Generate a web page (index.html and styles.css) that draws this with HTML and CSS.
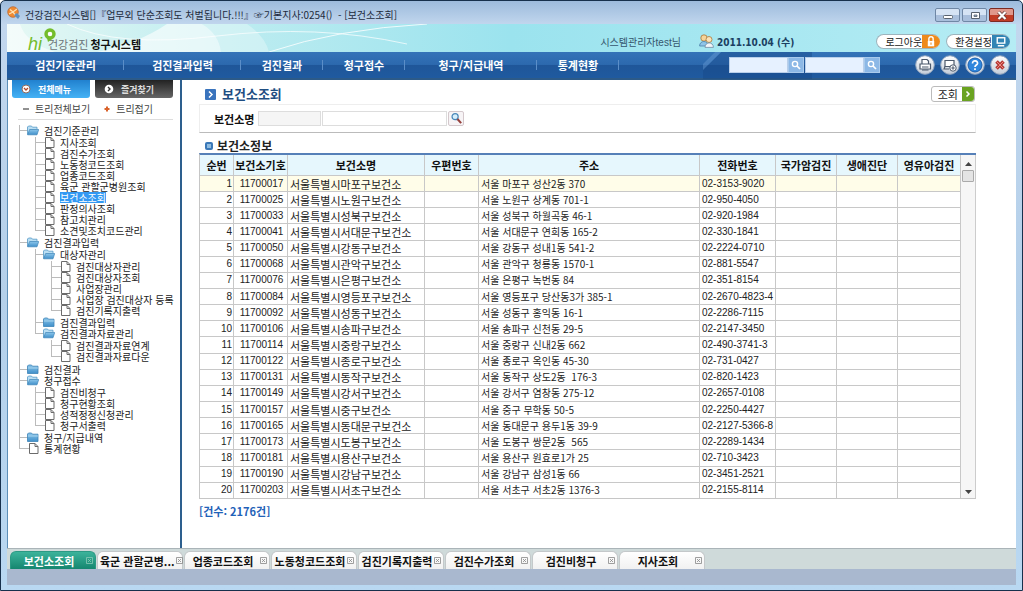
FILE: index.html
```html
<!DOCTYPE html>
<html lang="ko">
<head>
<meta charset="utf-8">
<title>보건소조회</title>
<link rel="stylesheet" href="styles.css">
</head>
<body>
<svg class="defs" aria-hidden="true">
  <defs>
    <linearGradient id="fold" x1="0" y1="0" x2="0" y2="1"><stop offset="0" stop-color="#8cc6ea"/><stop offset="1" stop-color="#3f8fca"/></linearGradient>
    <linearGradient id="ball" x1="0" y1="0" x2="0" y2="1"><stop offset="0" stop-color="#ffffff"/><stop offset="1" stop-color="#c3ccd8"/></linearGradient>
    <symbol id="folder" viewBox="0 0 12 10"><path d="M.5 9V1.5L1.5.5h3l1 1.2h5.500V9z" fill="url(#fold)" stroke="#3c84b8" stroke-width=".8"/><path d="M1 3.500h10" stroke="#b8def4" stroke-width=".8"/></symbol>
    <symbol id="open" viewBox="0 0 12 10"><path d="M.5 9V1.500L1.500.5h3l1 1.200H10v2" fill="#b9def3" stroke="#5599c6" stroke-width=".8"/><path d="M.6 9.300 2.600 4H11.700L10 9.300z" fill="url(#fold)" stroke="#3c84b8" stroke-width=".7"/></symbol>
    <symbol id="page" viewBox="0 0 12 11"><path d="M2.500.5h5.500l3 3v7H2.500z" fill="#fff" stroke="#6b6b6b"/><path d="M8 .5v3h3" fill="none" stroke="#6b6b6b"/></symbol>
    <symbol id="lens" viewBox="0 0 12 12"><circle cx="5" cy="5" r="2.600" fill="none" stroke="#fff" stroke-width="1.400"/><path d="m7 7 3 3" stroke="#fff" stroke-width="1.700"/></symbol>
    <symbol id="tabx" viewBox="0 0 7 7"><path d="M.5.5h6v6h-6zM2 2l3 3M5 2 2 5" fill="none" stroke="currentColor" stroke-width=".8"/></symbol>
  </defs>
</svg>
<div class="window">
  <header class="titlebar">
    <svg class="app-icon" viewBox="0 0 14 14"><circle cx="6" cy="6" r="5.300" fill="#ef8a32" stroke="#b8622a" stroke-width=".7"/><path d="M3 3.500 6 6l4-3M2 8l4-2 3 4" stroke="#fde0b4" stroke-width="1.300" fill="none"/><path d="m7 9 3-2 3 3-2 3z" fill="#5d8fc0"/></svg>
    <span class="title">건강검진시스템[]『업무외 단순조회도 처벌됩니다.!!!』☞기본지사:0254()&nbsp; - [보건소조회]</span>
    <div class="controls">
      <button type="button" aria-label="최소화"><svg viewBox="0 0 24 13"><rect x="7.500" y="6.500" width="9" height="3" rx="1" fill="#fff" stroke="#59636f"/></svg></button>
      <button type="button" aria-label="최대화"><svg viewBox="0 0 24 13"><path d="M8.500 3.500h8v6h-8z" fill="#fff" stroke="#59636f"/><path d="M11 6h3v1.500h-3z" fill="#9fb6d4" stroke="#59636f" stroke-width=".8"/></svg></button>
      <button type="button" class="close" aria-label="닫기"><svg viewBox="0 0 24 13"><path d="m8.500 3 7 7m0-7-7 7" stroke="#5c3434" stroke-width="3.600"/><path d="m8.500 3 7 7m0-7-7 7" stroke="#fff" stroke-width="2.200"/></svg></button>
    </div>
  </header>

  <div class="app">
    <div class="banner">
      <svg class="swoosh" viewBox="0 0 1009 28" preserveAspectRatio="none" aria-hidden="true">
        <path d="M0 0H13Q18 18 48 28H0z" fill="#fff" opacity=".55"/>
        <path d="M160 0H195Q212 10 214 28H90Q130 20 160 0z" fill="#fff" opacity=".6"/>
        <path d="M214 28Q212 10 195 0H240Q258 12 262 28z" fill="#fff" opacity=".3"/>
        <path d="M60 0Q110 24 210 12T400 20" fill="none" stroke="#fff" opacity=".7"/>
        <path d="M262 28Q330 5 420 0" fill="none" stroke="#fff" opacity=".8"/>
      </svg>
      <a class="logo" href="#">
        <svg viewBox="0 0 28 26" aria-hidden="true"><circle cx="22" cy="8" r="4" fill="#fff" stroke="#74bd2c" stroke-width="3.400"/><path d="m19 12 1 4 4-3" fill="#74bd2c"/></svg>
        <em>hi</em><span>건강검진</span><strong>청구시스템</strong>
      </a>
      <div class="session">
        <span class="user">시스템관리자test님</span>
        <svg class="people" viewBox="0 0 15 14"><circle cx="5" cy="4" r="3.200" fill="#f6d59a" stroke="#a8763a" stroke-width=".8"/><path d="M.6 12c0-6 8.500-6 8.500 0z" fill="#8fc5e8" stroke="#4b7fa8" stroke-width=".8"/><circle cx="10" cy="5.500" r="3" fill="#fbe3b8" stroke="#a8763a" stroke-width=".8"/><path d="M6 13.400c0-6 8.400-6 8.400 0z" fill="#f2f6fa" stroke="#6f8ba4" stroke-width=".8"/></svg>
        <strong class="date">2011.10.04 (수)</strong>
      </div>
      <button type="button" class="pill">로그아웃<span class="pill-end orange"><svg viewBox="0 0 16 14"><path d="M6 7V4.500a2 2 0 0 1 4 0V7" fill="none" stroke="#fff" stroke-width="1.300"/><rect x="5" y="6.500" width="6" height="5" fill="#fff"/><path d="M8 8v2" stroke="#ee8a1c"/></svg></span></button>
      <button type="button" class="pill">환경설정<span class="pill-end teal"><svg viewBox="0 0 16 14"><rect x="4.500" y="3.500" width="7" height="5" fill="none" stroke="#fff" stroke-width="1.300"/><path d="M5 11h6" stroke="#fff" stroke-width="1.300"/></svg></span></button>
    </div>

    <nav class="mainnav">
      <svg class="facets" viewBox="0 0 200 27" preserveAspectRatio="none" aria-hidden="true"><path d="M0 18 18 0h90v27H0z" fill="#164684" opacity=".4"/><path d="M0 18 18 0h-6L0 12z" fill="#6ea0d8" opacity=".4"/></svg>
      <a class="wide" href="#">검진기준관리</a>
      <a class="wide" href="#">검진결과입력</a>
      <a href="#">검진결과</a>
      <a href="#">청구접수</a>
      <a class="widest" href="#">청구/지급내역</a>
      <a href="#">통계현황</a>
      <div class="finders">
        <input type="text" aria-label="메뉴 검색"><button type="button" aria-label="메뉴 찾기"><svg><use href="#lens"/></svg></button>
        <input type="text" aria-label="화면 검색"><button type="button" aria-label="화면 찾기"><svg><use href="#lens"/></svg></button>
      </div>
      <div class="tools">
        <button type="button" aria-label="인쇄"><svg viewBox="0 0 20 20"><circle cx="10" cy="10" r="9.300" fill="url(#ball)" stroke="#8fa3bd"/><path d="M7 9V4.500h5l1.500 1.500v3M5 9h10.500v5H5z" fill="#fff" stroke="#4d5a6c" stroke-width="1.200"/><path d="M7 12h6.500M7 15h6.500" stroke="#4d5a6c"/></svg></button>
        <button type="button" aria-label="새 창"><svg viewBox="0 0 20 20"><circle cx="10" cy="10" r="9.300" fill="url(#ball)" stroke="#8fa3bd"/><path d="M5 5.500h9v6H5z" fill="#fff" stroke="#4d5a6c" stroke-width="1.200"/><circle cx="13" cy="13" r="3.200" fill="#fff" stroke="#4d5a6c"/><path d="M11.300 13h3.400M13 11.300v3.400M5 11.500l-1 2.500h5" stroke="#4d5a6c" stroke-width="1.100" fill="none"/></svg></button>
        <button type="button" aria-label="도움말"><svg viewBox="0 0 20 20"><circle cx="10" cy="10" r="9.300" fill="url(#ball)" stroke="#8fa3bd"/><circle cx="10" cy="10" r="7" fill="#2f86dc" stroke="#1c5fae"/><path d="M7.500 8.500c0-4 5.500-3.200 5 0-.3 1.600-2.500 1.600-2.500 3.500M10 13.200V15" fill="none" stroke="#fff" stroke-width="1.700"/></svg></button>
        <button type="button" aria-label="모두 닫기"><svg viewBox="0 0 20 20"><circle cx="10" cy="10" r="9.300" fill="url(#ball)" stroke="#8fa3bd"/><path d="m6.500 6.500 7 7m0-7-7 7" stroke="#b63a36" stroke-width="3.600"/><path d="m6.500 6.500 7 7m0-7-7 7" stroke="#ee8a80" stroke-width="1"/></svg></button>
      </div>
    </nav>

    <div class="body">
      <aside class="sidebar">
        <div class="side-tabs">
          <button type="button" class="on"><svg viewBox="0 0 10 10"><circle cx="5" cy="5" r="4" fill="#fff" stroke="#8f6b60"/><path d="m3 4 2 2 2-2" fill="none" stroke="#b5482a" stroke-width="1.300"/></svg>전체메뉴</button>
          <button type="button"><svg viewBox="0 0 10 10"><circle cx="5" cy="5" r="4.300" fill="#fff"/><path d="m4 3 2 2-2 2" fill="none" stroke="#333" stroke-width="1.400"/></svg>즐겨찾기</button>
        </div>
        <div class="side-actions">
          <button type="button"><svg viewBox="0 0 6 6"><path d="M0 3h6" stroke="#555" stroke-width="1.300"/></svg>트리전체보기</button>
          <button type="button"><svg viewBox="0 0 6 6"><path d="M.5 3h5M3 .5v5" stroke="#d9622b" stroke-width="2"/></svg>트리접기</button>
        </div>
        <ul class="tree">
          <li><a href="#"><svg><use href="#open"/></svg><span>검진기준관리</span></a>
            <ul>
              <li><a href="#"><svg><use href="#page"/></svg><span>지사조회</span></a></li>
              <li><a href="#"><svg><use href="#page"/></svg><span>검진수가조회</span></a></li>
              <li><a href="#"><svg><use href="#page"/></svg><span>노동청코드조회</span></a></li>
              <li><a href="#"><svg><use href="#page"/></svg><span>업종코드조회</span></a></li>
              <li><a href="#"><svg><use href="#page"/></svg><span>육군 관할군병원조회</span></a></li>
              <li><a href="#" class="selected"><svg><use href="#page"/></svg><span>보건소조회</span></a></li>
              <li><a href="#"><svg><use href="#page"/></svg><span>판정의사조회</span></a></li>
              <li><a href="#"><svg><use href="#page"/></svg><span>참고치관리</span></a></li>
              <li><a href="#"><svg><use href="#page"/></svg><span>소견및조치코드관리</span></a></li>
            </ul>
          </li>
          <li><a href="#"><svg><use href="#open"/></svg><span>검진결과입력</span></a>
            <ul>
              <li><a href="#"><svg><use href="#open"/></svg><span>대상자관리</span></a>
                <ul>
                  <li><a href="#"><svg><use href="#page"/></svg><span>검진대상자관리</span></a></li>
                  <li><a href="#"><svg><use href="#page"/></svg><span>검진대상자조회</span></a></li>
                  <li><a href="#"><svg><use href="#page"/></svg><span>사업장관리</span></a></li>
                  <li><a href="#"><svg><use href="#page"/></svg><span>사업장 검진대상자 등록</span></a></li>
                  <li><a href="#"><svg><use href="#page"/></svg><span>검진기록지출력</span></a></li>
                </ul>
              </li>
              <li><a href="#"><svg><use href="#folder"/></svg><span>검진결과입력</span></a></li>
              <li><a href="#"><svg><use href="#open"/></svg><span>검진결과자료관리</span></a>
                <ul>
                  <li><a href="#"><svg><use href="#page"/></svg><span>검진결과자료연계</span></a></li>
                  <li><a href="#"><svg><use href="#page"/></svg><span>검진결과자료다운</span></a></li>
                </ul>
              </li>
            </ul>
          </li>
          <li><a href="#"><svg><use href="#folder"/></svg><span>검진결과</span></a></li>
          <li><a href="#"><svg><use href="#open"/></svg><span>청구접수</span></a>
            <ul>
              <li><a href="#"><svg><use href="#page"/></svg><span>검진비청구</span></a></li>
              <li><a href="#"><svg><use href="#page"/></svg><span>청구현황조회</span></a></li>
              <li><a href="#"><svg><use href="#page"/></svg><span>성적정정신청관리</span></a></li>
              <li><a href="#"><svg><use href="#page"/></svg><span>청구서출력</span></a></li>
            </ul>
          </li>
          <li><a href="#"><svg><use href="#folder"/></svg><span>청구/지급내역</span></a></li>
          <li><a href="#"><svg><use href="#page"/></svg><span>통계현황</span></a></li>
        </ul>
      </aside>

      <main class="content">
        <div class="page-head">
          <svg viewBox="0 0 11 11" aria-hidden="true"><rect width="11" height="11" rx="1" fill="#3a74bd"/><path d="m4 2.500 3 3-3 3" fill="none" stroke="#fff" stroke-width="1.500"/></svg>
          <h1>보건소조회</h1>
          <button type="button" class="query"><span>조회</span><svg viewBox="0 0 12 14"><path d="M0 0h9a3 3 0 0 1 3 3v8a3 3 0 0 1-3 3H0z" fill="#6aa320"/><path d="m4.500 4.500 2.500 2.500-2.500 2.500" fill="none" stroke="#fff" stroke-width="1.500"/></svg></button>
        </div>
        <form class="filter">
          <label for="center-name">보건소명</label>
          <input type="text" class="code" aria-label="보건소기호" readonly>
          <input type="text" class="name" id="center-name">
          <button type="button" aria-label="보건소 찾기"><svg viewBox="0 0 14 14"><circle cx="5.500" cy="5" r="3.300" fill="#d6effc" stroke="#4a87b8" stroke-width="1.300"/><path d="m8 7.500 4 4.500" stroke="#96403c" stroke-width="2.200"/></svg></button>
        </form>
        <h2><svg viewBox="0 0 8 8" aria-hidden="true"><rect width="8" height="8" rx="2" fill="#3a78b8"/><rect x="2" y="2" width="4" height="4" fill="#8ebbe0"/></svg>보건소정보</h2>
        <div class="grid">
          <table>
            <colgroup><col class="c-no"><col class="c-code"><col class="c-name"><col class="c-zip"><col class="c-addr"><col class="c-tel"><col class="c-flag"><col class="c-flag"><col class="c-last"></colgroup>
            <thead><tr><th>순번</th><th>보건소기호</th><th>보건소명</th><th>우편번호</th><th>주소</th><th>전화번호</th><th>국가암검진</th><th>생애진단</th><th>영유아검진</th></tr></thead>
            <tbody>
              <tr class="current"><td>1</td><td>11700017</td><td>서울특별시마포구보건소</td><td></td><td>서울 마포구 성산2동 370</td><td>02-3153-9020</td><td></td><td></td><td></td></tr>
              <tr><td>2</td><td>11700025</td><td>서울특별시노원구보건소</td><td></td><td>서울 노원구 상계동 701-1</td><td>02-950-4050</td><td></td><td></td><td></td></tr>
              <tr><td>3</td><td>11700033</td><td>서울특별시성북구보건소</td><td></td><td>서울 성북구 하월곡동 46-1</td><td>02-920-1984</td><td></td><td></td><td></td></tr>
              <tr><td>4</td><td>11700041</td><td>서울특별시서대문구보건소</td><td></td><td>서울 서대문구 연희동 165-2</td><td>02-330-1841</td><td></td><td></td><td></td></tr>
              <tr><td>5</td><td>11700050</td><td>서울특별시강동구보건소</td><td></td><td>서울 강동구 성내1동 541-2</td><td>02-2224-0710</td><td></td><td></td><td></td></tr>
              <tr><td>6</td><td>11700068</td><td>서울특별시관악구보건소</td><td></td><td>서울 관악구 청룡동 1570-1</td><td>02-881-5547</td><td></td><td></td><td></td></tr>
              <tr><td>7</td><td>11700076</td><td>서울특별시은평구보건소</td><td></td><td>서울 은평구 녹번동 84</td><td>02-351-8154</td><td></td><td></td><td></td></tr>
              <tr><td>8</td><td>11700084</td><td>서울특별시영등포구보건소</td><td></td><td>서울 영등포구 당산동3가 385-1</td><td>02-2670-4823-4</td><td></td><td></td><td></td></tr>
              <tr><td>9</td><td>11700092</td><td>서울특별시성동구보건소</td><td></td><td>서울 성동구 홍익동 16-1</td><td>02-2286-7115</td><td></td><td></td><td></td></tr>
              <tr><td>10</td><td>11700106</td><td>서울특별시송파구보건소</td><td></td><td>서울 송파구 신천동 29-5</td><td>02-2147-3450</td><td></td><td></td><td></td></tr>
              <tr><td>11</td><td>11700114</td><td>서울특별시중랑구보건소</td><td></td><td>서울 중랑구 신내2동 662</td><td>02-490-3741-3</td><td></td><td></td><td></td></tr>
              <tr><td>12</td><td>11700122</td><td>서울특별시종로구보건소</td><td></td><td>서울 종로구 옥인동 45-30</td><td>02-731-0427</td><td></td><td></td><td></td></tr>
              <tr><td>13</td><td>11700131</td><td>서울특별시동작구보건소</td><td></td><td>서울 동작구 상도2동&nbsp; 176-3</td><td>02-820-1423</td><td></td><td></td><td></td></tr>
              <tr><td>14</td><td>11700149</td><td>서울특별시강서구보건소</td><td></td><td>서울 강서구 염창동 275-12</td><td>02-2657-0108</td><td></td><td></td><td></td></tr>
              <tr><td>15</td><td>11700157</td><td>서울특별시중구보건소</td><td></td><td>서울 중구 무학동 50-5</td><td>02-2250-4427</td><td></td><td></td><td></td></tr>
              <tr><td>16</td><td>11700165</td><td>서울특별시동대문구보건소</td><td></td><td>서울 동대문구 용두1동 39-9</td><td>02-2127-5366-8</td><td></td><td></td><td></td></tr>
              <tr><td>17</td><td>11700173</td><td>서울특별시도봉구보건소</td><td></td><td>서울 도봉구 쌍문2동&nbsp; 565</td><td>02-2289-1434</td><td></td><td></td><td></td></tr>
              <tr><td>18</td><td>11700181</td><td>서울특별시용산구보건소</td><td></td><td>서울 용산구 원효로1가 25</td><td>02-710-3423</td><td></td><td></td><td></td></tr>
              <tr><td>19</td><td>11700190</td><td>서울특별시강남구보건소</td><td></td><td>서울 강남구 삼성1동 66</td><td>02-3451-2521</td><td></td><td></td><td></td></tr>
              <tr><td>20</td><td>11700203</td><td>서울특별시서초구보건소</td><td></td><td>서울 서초구 서초2동 1376-3</td><td>02-2155-8114</td><td></td><td></td><td></td></tr>
            </tbody>
          </table>
          <div class="scroll" aria-hidden="true">
            <svg viewBox="0 0 7 4"><path d="M0 4 3.500 0 7 4z" fill="#444"/></svg>
            <span class="thumb"></span>
            <svg class="down" viewBox="0 0 7 4"><path d="M0 0h7L3.500 4z" fill="#444"/></svg>
          </div>
        </div>
        <p class="count">[건수: 2176건]</p>
      </main>
    </div>

    <div class="doc-tabs">
      <button type="button" class="on"><span>보건소조회</span><svg><use href="#tabx"/></svg></button>
      <button type="button"><span>육군 관할군병...</span><svg><use href="#tabx"/></svg></button>
      <button type="button"><span>업종코드조회</span><svg><use href="#tabx"/></svg></button>
      <button type="button"><span>노동청코드조회</span><svg><use href="#tabx"/></svg></button>
      <button type="button"><span>검진기록지출력</span><svg><use href="#tabx"/></svg></button>
      <button type="button"><span>검진수가조회</span><svg><use href="#tabx"/></svg></button>
      <button type="button"><span>검진비청구</span><svg><use href="#tabx"/></svg></button>
      <button type="button"><span>지사조회</span><svg><use href="#tabx"/></svg></button>
    </div>
    <footer class="status"></footer>
  </div>
</div>
</body>
</html>
```
FILE: styles.css
```css
* { box-sizing: border-box; }
body { margin: 0; font: 11px "Noto Sans CJK KR", sans-serif; color: #222; }
button, input { font: inherit; color: inherit; margin: 0; padding: 0; border: 0; background: none; min-width: 0; }
button { display: flex; align-items: center; white-space: nowrap; }
a { color: inherit; text-decoration: none; }
svg { display: block; flex: none; }
h1, h2, p, ul { margin: 0; padding: 0; }
.defs { position: absolute; width: 0; height: 0; }

.window {
  display: flex; flex-direction: column; height: 100vh; padding: 0 6px 5px;
  border: 1px solid #17304c; border-radius: 5px 5px 0 0;
  background: linear-gradient(#9dbbdc, #c2d7ee 24px, #b4d0ea 50%, #b9d8f2);
}
.titlebar { display: flex; align-items: center; height: 23px; flex: none; }
.app-icon { width: 14px; height: 14px; }
.title { flex: 1; margin-left: 4px; padding-top: 4px; font-size: 10px; line-height: 18px; white-space: nowrap; color: #1d2b3c; }
.controls { display: flex; gap: 2px; padding: 5px 2px 0 0; }
.controls button {
  width: 25px; height: 14px; justify-content: center; border: 1px solid #6f87a5; border-radius: 2px;
  background: linear-gradient(#d5e3f4 50%, #a9bfdc 50%);
}
.controls svg { width: 24px; height: 13px; }
.controls .close { border-color: #7c2a22; background: linear-gradient(#e0988c 50%, #c13c26 50%); }

.app { flex: 1; display: flex; flex-direction: column; min-height: 0; }
.banner {
  position: relative; display: flex; align-items: center; gap: 6px; height: 28px; flex: none; padding: 6px 6px 0 21px;
  background: linear-gradient(90deg, #e6f8f4, #bdecf0 22%, #9be3ee 50%, #b5ecf4);
}
.swoosh { position: absolute; inset: 0; width: 100%; height: 100%; }
.logo { position: relative; display: flex; align-items: center; flex: 1; padding-top: 5px; font-size: 11px; line-height: 16px; white-space: nowrap; }
.logo svg { position: absolute; left: 0; top: -5px; width: 28px; height: 26px; }
.logo em { width: 20px; font: italic 18px/16px "Liberation Sans", sans-serif; color: #74bd2c; }
.logo span { color: #6d7478; margin-right: 2px; }
.logo strong { color: #111; }
.session { position: relative; display: flex; align-items: center; color: #35566e; margin-right: 76px; }
.user { font-size: 10px; font-family: "Liberation Sans", "Noto Sans CJK KR", sans-serif; }
.people { width: 15px; height: 14px; margin: 0 3px 0 18px; }
.date { font: bold 10px "DejaVu Sans Condensed", "Noto Sans CJK KR", sans-serif; color: #1b3f62; }
.pill {
  position: relative; height: 15px; padding-left: 8px; border: 1px solid #9db4bd; border-right: 0; border-radius: 8px;
  background: #fff; font-size: 10px; line-height: 13px; color: #222; overflow: hidden;
}
.pill-end { height: 15px; }
.pill svg { width: 18px; height: 15px; }
.orange { background: #ee8a1c; }
.teal { background: #3285b4; }

.mainnav {
  position: relative; display: flex; align-items: center; height: 28px; flex: none;
  background: linear-gradient(#3473b8, #2c69ae 48%, #1f5699 50%, #1f5a9f); border-bottom: 2px solid #2c5a88;
}
.mainnav .facets { position: absolute; left: 69%; top: 0; width: 20%; height: 27px; }
.mainnav a {
  width: 82px; flex: none; text-align: center; font-weight: bold; line-height: 12px; color: #fff;
  background: linear-gradient(#5b8ec8, #5b8ec8) 100% 50% / 1px 10px no-repeat;
}
.mainnav .wide { width: 117px; }
.mainnav .widest { width: 132px; }
.finders { position: relative; display: flex; flex: 1; justify-content: flex-end; margin-right: 34px; }
.finders input { width: 59px; height: 16px; background: #e6f1ff; border: 1px solid #b9cfea; }
.finders button { width: 16px; height: 16px; margin-right: 1px; justify-content: center; background: #8cb8e6; border: 1px solid #a9caec; }
.finders svg { width: 12px; height: 12px; }
.tools { position: relative; display: flex; gap: 5px; margin-right: 6px; }
.tools svg { width: 20px; height: 20px; }

.body { flex: 1; display: flex; min-height: 0; background: #fff; }
.sidebar { width: 175px; flex: none; border-left: 1px solid #5d8fb8; border-right: 2px solid #2d5f8e; }
.side-tabs { display: flex; gap: 5px; padding: 0 7px 0 4px; }
.side-tabs button {
  flex: 1; height: 18px; gap: 7px; padding-left: 9px; border-radius: 0 0 3px 3px;
  background: linear-gradient(#222, #666); color: #ddd; font-size: 9px; font-weight: bold;
}
.side-tabs .on { background: linear-gradient(#2181cf, #45b2f5); color: #fff; }
.side-tabs svg { width: 10px; height: 10px; }
.side-actions { display: flex; gap: 14px; margin: 0 7px 5px 10px; padding: 3px 0 3px 5px; border-bottom: 1px solid #ddd; }
.side-actions button { gap: 6px; font-size: 10px; line-height: 15px; color: #444; }
.side-actions svg { width: 6px; height: 6px; }

.tree, .tree ul { list-style: none; }
.tree { margin-left: 11px; font-size: 10px; line-height: 11px; }
.tree ul { padding: 1px 0; margin-left: 8px; }
.tree li {
  padding-left: 8px;
  background: linear-gradient(#bbb, #bbb) 0 0 / 1px 100% no-repeat, linear-gradient(#bbb, #bbb) 0 5px / 10px 1px no-repeat;
}
.tree li:last-child {
  background: linear-gradient(#bbb, #bbb) 0 0 / 1px 6px no-repeat, linear-gradient(#bbb, #bbb) 0 5px / 10px 1px no-repeat;
}
.tree a { display: flex; align-items: center; gap: 5px; height: 11px; white-space: nowrap; }
.tree svg { width: 12px; height: 11px; }
.selected span { background: #3399f3; color: #fff; }

.content { flex: 1; min-width: 0; display: flex; flex-direction: column; padding: 6px 40px 29px 17px; }
.page-head { display: flex; align-items: center; gap: 6px; padding: 0 1px 2px 6px; }
.page-head > svg { width: 11px; height: 11px; }
h1 { flex: 1; font-size: 13px; line-height: 16px; color: #1f4e82; }
.query { height: 16px; border: 1px solid #bbb; border-radius: 3px; background: #fff; }
.query span { padding: 0 4px 0 6px; }
.query svg { width: 12px; height: 14px; }
.filter {
  display: flex; align-items: center; gap: 1px; height: 29px; flex: none; padding-left: 14px;
  border: 1px solid #eee; border-bottom: 1px solid #bbb;
}
.filter label { width: 43px; font-weight: bold; color: #111; }
.filter input { height: 15px; border: 1px solid #ddd; background: #fff; }
.filter .code { width: 63px; background: #f5f5f5; }
.filter .name { width: 125px; }
.filter button { width: 16px; height: 15px; justify-content: center; border: 1px solid #d4c8cc; border-radius: 2px; background: #f7f4f6; }
.filter button svg { width: 13px; height: 13px; }
h2 { display: flex; align-items: center; gap: 4px; padding: 5px 0 0 6px; font-size: 12px; line-height: 15px; color: #222; }
h2 svg { width: 8px; height: 8px; }

.grid { flex: 1; display: flex; min-height: 0; border-top: 2px solid #5680b8; border-left: 1px solid #c6c6c6; border-bottom: 1px solid #c6c6c6; }
table { flex: 1; width: 0; height: 100%; table-layout: fixed; border-collapse: separate; border-spacing: 0; }
.c-no { width: 34px; }
.c-code { width: 54px; }
.c-name { width: 137px; }
.c-zip { width: 54px; }
.c-tel { width: 76px; }
.c-flag { width: 61px; }
.c-last { width: 63px; }
th, td { padding: 0; border-right: 1px solid #c8c8c8; border-bottom: 1px solid #c8c8c8; line-height: 14px; white-space: nowrap; }
th { height: 21px; background: #e6f7fd; color: #111; }
td { padding-left: 2px; }
tbody tr:last-child td { border-bottom: 0; }
td:nth-child(1), td:nth-child(2), td:nth-child(6) { font-family: "Liberation Sans", sans-serif; font-size: 10px; }
td:nth-child(1) { text-align: right; padding-right: 1px; }
td:nth-child(2) { text-align: center; }
td:nth-child(5) { font-size: 10px; }
.current td { background: #fffde9; }
.scroll { width: 15px; flex: none; display: flex; flex-direction: column; align-items: center; gap: 4px; padding: 7px 0 4px; background: #f6f6f6; border-right: 1px solid #ccc; }
.scroll svg { width: 7px; height: 4px; }
.thumb { width: 12px; height: 12px; border: 1px solid #aaa; border-radius: 1px; background: #e4e4e4; }
.scroll .down { margin-top: auto; }
.count { padding-top: 4px; font-weight: bold; line-height: 16px; color: #1f62b8; }

.doc-tabs { display: flex; gap: 1px; flex: none; height: 21px; padding: 2px 3px 0; background: #cfdada; border-top: 1px solid #aab4b8; }
.doc-tabs button {
  flex: 0 0 86px; gap: 1px; padding: 0 2px; border: 1px solid #c4c8ca; border-bottom: 0; border-radius: 6px 6px 0 0;
  background: linear-gradient(#fff, #f1f1f1); font-weight: bold; color: #111;
}
.doc-tabs span { flex: 1; text-align: center; }
.doc-tabs svg { width: 7px; height: 7px; color: #888; }
.doc-tabs .on { background: linear-gradient(#3cb39b, #15866f); border-color: #2b9a84; color: #fff; }
.doc-tabs .on svg { color: #8cc9b8; }
.status { height: 16px; flex: none; background: #a9b8cf; }
```
